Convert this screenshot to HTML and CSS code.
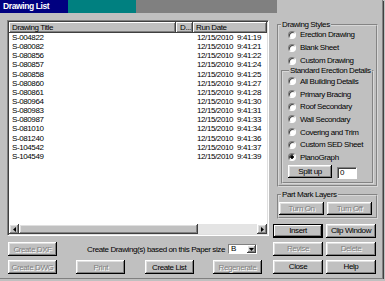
FILE: index.html
```html
<!DOCTYPE html>
<html lang="en">
<head>
    <meta charset="UTF-8" />
    <title>Drawing List</title>
    <link rel="stylesheet" href="styles.css">
</head>
<body>
    <div class="window">
        <div class="titlebar">Drawing List</div>
        <div class="content">
            <div class="left">
                <div class="list">
                    <div class="list-head">
                        <div class="col col-title">Drawing Title</div>
                        <div class="col col-d">D...</div>
                        <div class="col col-date">Run Date</div>
                    </div>
                    <div class="list-body">
                        <div class="row"><span class="c-title">S-004822</span><span class="c-d"></span><span class="c-date">12/15/2010</span><span class="c-time">9:41:19</span></div>
                        <div class="row"><span class="c-title">S-080082</span><span class="c-d"></span><span class="c-date">12/15/2010</span><span class="c-time">9:41:21</span></div>
                        <div class="row"><span class="c-title">S-080856</span><span class="c-d"></span><span class="c-date">12/15/2010</span><span class="c-time">9:41:22</span></div>
                        <div class="row"><span class="c-title">S-080857</span><span class="c-d"></span><span class="c-date">12/15/2010</span><span class="c-time">9:41:24</span></div>
                        <div class="row"><span class="c-title">S-080858</span><span class="c-d"></span><span class="c-date">12/15/2010</span><span class="c-time">9:41:25</span></div>
                        <div class="row"><span class="c-title">S-080860</span><span class="c-d"></span><span class="c-date">12/15/2010</span><span class="c-time">9:41:27</span></div>
                        <div class="row"><span class="c-title">S-080861</span><span class="c-d"></span><span class="c-date">12/15/2010</span><span class="c-time">9:41:28</span></div>
                        <div class="row"><span class="c-title">S-080964</span><span class="c-d"></span><span class="c-date">12/15/2010</span><span class="c-time">9:41:30</span></div>
                        <div class="row"><span class="c-title">S-080983</span><span class="c-d"></span><span class="c-date">12/15/2010</span><span class="c-time">9:41:31</span></div>
                        <div class="row"><span class="c-title">S-080987</span><span class="c-d"></span><span class="c-date">12/15/2010</span><span class="c-time">9:41:33</span></div>
                        <div class="row"><span class="c-title">S-081010</span><span class="c-d"></span><span class="c-date">12/15/2010</span><span class="c-time">9:41:34</span></div>
                        <div class="row"><span class="c-title">S-081240</span><span class="c-d"></span><span class="c-date">12/15/2010</span><span class="c-time">9:41:36</span></div>
                        <div class="row"><span class="c-title">S-104542</span><span class="c-d"></span><span class="c-date">12/15/2010</span><span class="c-time">9:41:37</span></div>
                        <div class="row"><span class="c-title">S-104549</span><span class="c-d"></span><span class="c-date">12/15/2010</span><span class="c-time">9:41:39</span></div>
                    </div>
                    <div class="hscroll">
                        <div class="sb-btn raised"><svg width="3" height="5" viewBox="0 0 3 5"><path d="M3 0V5L0 2.5Z"/></svg></div>
                        <div class="sb-thumb raised"></div>
                        <div class="sb-track"></div>
                        <div class="sb-btn raised"><svg width="3" height="5" viewBox="0 0 3 5"><path d="M0 0V5L3 2.5Z"/></svg></div>
                    </div>
                </div>
                <div class="actions">
                    <div class="action-row">
                        <button class="btn" disabled>Create DXF</button>
                        <span class="paper-label">Create Drawing(s) based on this Paper size</span>
                        <div class="combo">
                            <span class="combo-val">B</span>
                            <span class="combo-btn raised"><svg width="5" height="3" viewBox="0 0 5 3"><path d="M0 0H5L2.5 3Z"/></svg></span>
                        </div>
                    </div>
                    <div class="action-row spread">
                        <button class="btn" disabled>Create DWG</button>
                        <button class="btn" disabled>Print</button>
                        <button class="btn">Create List</button>
                        <button class="btn" disabled>Regenerate</button>
                    </div>
                </div>
            </div>
            <div class="right">
                <fieldset class="group styles">
                    <legend>Drawing Styles</legend>
                    <div class="radios">
                        <label class="radio"><span class="dot"></span>Erection Drawing</label>
                        <label class="radio"><span class="dot"></span>Blank Sheet</label>
                        <label class="radio"><span class="dot"></span>Custom Drawing</label>
                    </div>
                    <fieldset class="group inner">
                        <legend>Standard Erection Details</legend>
                        <label class="radio"><span class="dot"></span>All Building Details</label>
                        <label class="radio"><span class="dot"></span>Primary Bracing</label>
                        <label class="radio"><span class="dot"></span>Roof Secondary</label>
                        <label class="radio"><span class="dot"></span>Wall Secondary</label>
                        <label class="radio"><span class="dot"></span>Covering and Trim</label>
                        <label class="radio"><span class="dot"></span>Custom SED Sheet</label>
                        <label class="radio"><span class="dot on"></span>PlanoGraph</label>
                        <div class="split">
                            <button class="btn split-btn">Split up</button>
                            <span class="field">0</span>
                        </div>
                    </fieldset>
                </fieldset>
                <fieldset class="group layers">
                    <legend>Part Mark Layers</legend>
                    <div class="layer-btns">
                        <button class="btn" disabled>Turn On</button>
                        <button class="btn" disabled>Turn Off</button>
                    </div>
                </fieldset>
                <div class="btn-grid">
                    <button class="btn default">Insert</button>
                    <button class="btn">Clip Window</button>
                    <button class="btn" disabled>Revise</button>
                    <button class="btn" disabled>Delete</button>
                    <button class="btn">Close</button>
                    <button class="btn">Help</button>
                </div>
            </div>
        </div>
    </div>
</body>
</html>
```
FILE: styles.css
```css
body {
    margin: 0;
    background: #c0c0c0;
    font-family: "Liberation Sans", Arial, sans-serif;
    font-size: 8px;
    letter-spacing: -0.4px;
    color: #000;
}
.window {
    width: 383px;
    height: 279px;
    box-sizing: border-box;
    border-right: 1px solid #808080;
    border-bottom: 1px solid #808080;
    box-shadow: 1px 1px 0 #404040;
    background: #c0c0c0;
}
.titlebar {
    height: 13px;
    line-height: 13px;
    padding-left: 3px;
    color: #fff;
    font-weight: bold;
    font-size: 8.5px;
    letter-spacing: -0.4px;
    background: linear-gradient(to right, #000080 0 68px, #008080 68px 136px, #808080 136px 277px, #c0c0c0 277px);
}
.content {
    display: flex;
    gap: 4px;
    padding: 7px 0 0 7px;
}
.left {
    width: 262px;
}
.right {
    width: 105px;
}
.raised {
    background: #c0c0c0;
    box-shadow: inset -1px -1px 0 #404040, inset 1px 1px 0 #fff, inset -2px -2px 0 #808080, inset 2px 2px 0 #dfdfdf;
}

/* list view */
.list {
    height: 216px;
    box-sizing: border-box;
    display: flex;
    flex-direction: column;
    padding: 1px;
    border: 1px solid;
    border-color: #808080 #fff #fff #808080;
    box-shadow: inset 1px 1px 0 #404040, inset -1px -1px 0 #dfdfdf;
    background: #fff;
}
.list-head {
    display: flex;
    height: 11px;
    background: #c0c0c0;
}
.col {
    box-sizing: border-box;
    line-height: 11px;
    padding-left: 3px;
    white-space: nowrap;
    overflow: hidden;
    box-shadow: inset -1px -1px 0 #404040, inset 1px 1px 0 #fff, inset -2px -2px 0 #808080;
}
.col-title {
    width: 167px;
}
.col-d {
    width: 17px;
    padding-left: 4px;
}
.col-date {
    flex: 1;
}
.list-body {
    flex: 1;
}
.row {
    display: flex;
    height: 9.15px;
    line-height: 9.15px;
    white-space: nowrap;
}
.c-title {
    width: 167px;
    padding-left: 3px;
    box-sizing: border-box;
}
.c-d {
    width: 17px;
}
.c-date {
    padding-left: 4px;
}
.c-time {
    margin-left: 4px;
}
.hscroll {
    display: flex;
    height: 10px;
    background: #e4e4e4;
}
.sb-btn {
    width: 10px;
    display: flex;
    align-items: center;
    justify-content: center;
}
.sb-thumb {
    width: 179px;
}
.sb-track {
    flex: 1;
}

/* buttons */
.btn {
    height: 14px;
    padding: 0;
    border: none;
    font: inherit;
    letter-spacing: inherit;
    white-space: nowrap;
    color: #000;
    background: #c0c0c0;
    box-shadow: inset -1px -1px 0 #000, inset 1px 1px 0 #fff, inset -2px -2px 0 #808080, inset 2px 2px 0 #dfdfdf;
}
.btn:disabled {
    color: #808080;
    text-shadow: 1px 1px 0 #fff;
}
.btn.default {
    box-shadow: inset 0 0 0 1px #000, inset -2px -2px 0 #000, inset 2px 2px 0 #fff, inset -3px -3px 0 #808080;
}

/* bottom actions */
.actions {
    display: flex;
    flex-direction: column;
    gap: 4px;
    margin-top: 6px;
    padding: 0 7px 0 1px;
}
.action-row {
    display: flex;
    align-items: center;
    height: 14px;
}
.spread {
    justify-content: space-between;
}
.actions .btn {
    width: 49px;
}
.paper-label {
    margin-left: 30px;
    white-space: nowrap;
}
.combo {
    display: flex;
    width: 29px;
    height: 10px;
    box-sizing: border-box;
    margin-left: auto;
    margin-right: 5px;
    border: 1px solid;
    border-color: #808080 #fff #fff #808080;
    background: #fff;
}
.combo-val {
    flex: 1;
    padding-left: 2px;
    line-height: 8px;
}
.combo-btn {
    width: 9px;
    display: flex;
    align-items: center;
    justify-content: center;
}

/* right panel */
.group {
    margin: 0;
    min-width: 0;
    border: 2px groove #d8d8d8;
}
.group legend {
    padding: 0 1px;
    line-height: 8px;
}
.styles {
    margin: 1px 0 0 4px;
    padding: 0 2px 1px 2px;
}
.radios {
    margin-top: -1px;
    padding-left: 7px;
}
.styles > .radios .radio {
    height: 13px;
}
.radio {
    display: flex;
    align-items: center;
    height: 12.7px;
    white-space: nowrap;
}
.dot {
    width: 8px;
    height: 8px;
    box-sizing: border-box;
    margin-right: 4px;
    border-radius: 50%;
    border: 1px solid;
    border-color: #808080 #fff #fff #808080;
    box-shadow: inset 1px 1px 0 #404040;
    background: #fff;
}
.dot.on {
    background: radial-gradient(circle, #000 0 1.5px, #fff 1.9px);
}
.inner {
    padding: 0 0 3px 5px;
}
.inner legend {
    margin-left: 1px;
}
.split {
    display: flex;
    align-items: flex-start;
    gap: 5px;
    margin-top: 1px;
}
.split-btn {
    width: 44px;
    height: 13px;
}
.field {
    width: 20px;
    height: 12px;
    box-sizing: border-box;
    margin-top: 2px;
    padding-left: 2px;
    line-height: 10px;
    border: 1px solid;
    border-color: #808080 #fff #fff #808080;
    box-shadow: inset 1px 1px 0 #404040;
    background: #fff;
}
.layers {
    margin: 4px 0 0 4px;
    padding: 3px 0 2px 0;
}
.layers legend {
    margin-left: 2px;
}
.layer-btns {
    display: flex;
    gap: 3px;
}
.layer-btns .btn {
    width: 45px;
    height: 13px;
}
.btn-grid {
    display: grid;
    grid-template-columns: 50px 50px;
    gap: 4px 3px;
    margin-top: 5px;
}
```
